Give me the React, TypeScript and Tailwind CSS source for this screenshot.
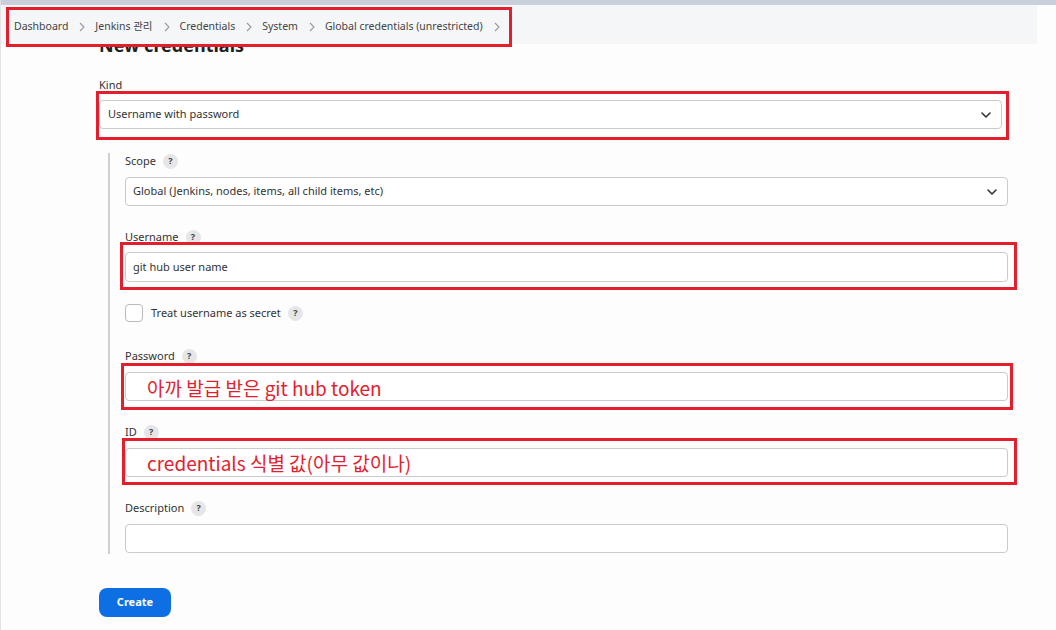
import React from "react";

const font = { fontFamily: '"Noto Sans", "Noto Sans CJK KR", sans-serif' };
const kr = { fontFamily: '"Noto Sans CJK KR", "Noto Sans", sans-serif' };

function Help() {
  return (
    <span className="ml-[7px] inline-flex h-[15px] w-[15px] items-center justify-center rounded-full bg-[#e6e6e8] text-[9px] font-bold text-[#444]">
      ?
    </span>
  );
}

function Chevron() {
  return (
    <svg width="10" height="6" viewBox="0 0 10 6" className="text-[#333]">
      <path d="M1 1l4 4 4-4" fill="none" stroke="currentColor" strokeWidth="1.6" strokeLinecap="round" strokeLinejoin="round" />
    </svg>
  );
}

function Crumb({ label, first }: { label: string; first?: boolean }) {
  return (
    <div className="flex items-center">
      <span className={first ? "" : "ml-[10px]"}>{label}</span>
      <svg width="6" height="10" viewBox="0 0 6 10" className="ml-[11px] text-[#9a9a9a]">
        <path d="M1 1l4 4-4 4" fill="none" stroke="currentColor" strokeWidth="1.1" />
      </svg>
    </div>
  );
}

function RedBox({ className }: { className: string }) {
  return <div className={"pointer-events-none absolute border-[3px] border-[#e31e2d] " + className} />;
}

export default function App() {
  return (
    <div className="relative h-[630px] w-[1056px] overflow-hidden border-l border-[#e3e3e3] bg-[#fdfdfd] text-[#333]" style={font}>
      {/* top strip */}
      <div className="h-[5px] bg-[#c9d0dc]" />

      {/* breadcrumb (sticky overlay) */}
      <div className="absolute left-0 top-[5px] z-10 h-[39px] w-[1036px] bg-[#f5f6f8]">
        <div className="flex h-full items-center pl-[13px] pt-[5px] text-[10.5px] text-[#444]">
          <Crumb label="Dashboard" first />
          <Crumb label="Jenkins 관리" />
          <Crumb label="Credentials" />
          <Crumb label="System" />
          <Crumb label="Global credentials (unrestricted)" />
        </div>
      </div>
      <RedBox className="left-[5px] top-[7px] z-20 h-[40px] w-[506px]" />

      <div className="pl-[98px]">
        <h1 className="mt-[29px] text-[18px] font-bold leading-[22px] text-[#222]">New credentials</h1>

        {/* Kind */}
        <div className="mt-[22px] flex h-[14px] items-center text-[11px]">Kind</div>
        <div className="relative mt-[8px] w-[903px]">
          <div className="flex h-[29px] items-center justify-between rounded-[4px] border border-[#c9cbcf] bg-white pl-[8px] pr-[10px] text-[11px]">
            <span>Username with password</span>
            <Chevron />
          </div>
          <RedBox className="-left-[3px] -right-[7px] -top-[9px] -bottom-[11px]" />
        </div>

        {/* nested */}
        <div className="ml-[9px] mt-[24px] w-[900px] border-l-2 border-[#d0d0d0] pb-[1px] pl-[15px]">
          <div className="flex h-[14px] items-center pt-[2px] text-[11px]">
            Scope <Help />
          </div>
          <div className="mt-[10px] flex h-[29px] w-[883px] items-center justify-between rounded-[4px] border border-[#c9cbcf] bg-white pl-[7px] pr-[10px] text-[11px]">
            <span>Global (Jenkins, nodes, items, all child items, etc)</span>
            <Chevron />
          </div>

          <div className="mt-[24px] flex h-[14px] items-center text-[11px]">
            Username <Help />
          </div>
          <div className="relative mt-[8px] w-[883px]">
            <div className="flex h-[30px] items-center rounded-[4px] border border-[#c9cbcf] bg-white pl-[7px] text-[11px]">
              git hub user name
            </div>
            <RedBox className="-left-[5px] -right-[9px] -top-[10px] -bottom-[8px]" />
          </div>

          <div className="mt-[22px] flex items-center text-[11px]">
            <span className="h-[18px] w-[18px] rounded-[4px] border border-[#b9bbbf] bg-white" />
            <span className="ml-[8px]">Treat username as secret</span>
            <Help />
          </div>

          <div className="mt-[27px] flex h-[14px] items-center text-[11px]">
            Password <Help />
          </div>
          <div className="relative mt-[9px] w-[883px]">
            <div className="flex h-[29px] items-center rounded-[4px] border border-[#c9cbcf] bg-white pl-[21px] pt-[4px] text-[19px] text-[#e31e2d]" style={kr}>
              아까 발급 받은 git hub token
            </div>
            <RedBox className="-left-[4px] -right-[5px] -top-[9px] -bottom-[9px]" />
          </div>

          <div className="mt-[24px] flex h-[14px] items-center text-[11px]">
            ID <Help />
          </div>
          <div className="relative mt-[9px] w-[883px]">
            <div className="flex h-[29px] items-center rounded-[4px] border border-[#c9cbcf] bg-white pl-[21px] pt-[2px] text-[19px] text-[#e31e2d]" style={kr}>
              credentials 식별 값(아무 값이나)
            </div>
            <RedBox className="-left-[3px] -right-[9px] -top-[10px] -bottom-[8px]" />
          </div>

          <div className="mt-[24px] flex h-[14px] items-center text-[11px]">
            Description <Help />
          </div>
          <div className="mt-[9px] h-[29px] w-[883px] rounded-[4px] border border-[#c9cbcf] bg-white" />
        </div>

        <button className="mt-[34px] flex h-[29px] w-[72px] items-center justify-center rounded-[8px] bg-[#0d6fe3] text-[11px] font-bold text-white">
          Create
        </button>
      </div>
    </div>
  );
}
